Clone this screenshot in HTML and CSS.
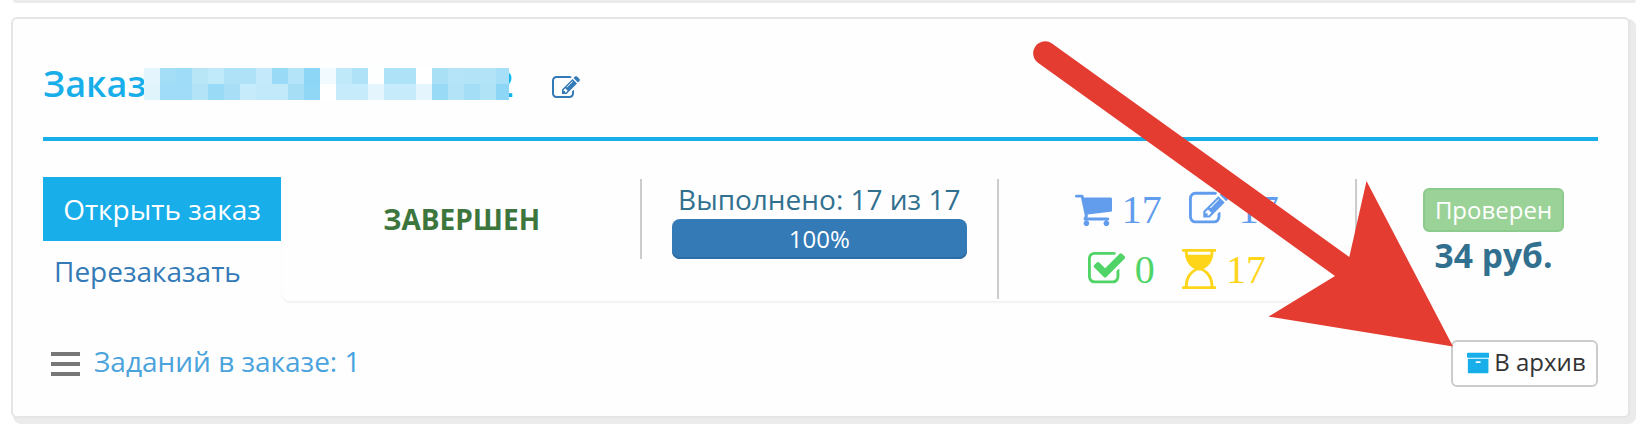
FILE: index.html
```html
<!DOCTYPE html>
<html lang="ru">
<head>
  <meta charset="UTF-8">
  <meta name="viewport" content="width=device-width, initial-scale=1">
  <title>Заказы</title>
  <link rel="stylesheet" href="styles.css">
</head>
<body>

  <div class="prev-order"></div>

  <div class="order">

    <!-- Заголовок заказа -->
    <div class="order-header">
      <h2>Заказ</h2>
      <svg class="mosaic" width="365" height="32" viewBox="0 0 365 32" shape-rendering="crispEdges" id="mosaic"></svg>
      <span class="title-end">2</span>
      <svg class="edit-icon" viewBox="64 0 1792 1792"><use href="#i-edit"/></svg>
    </div>

    <!-- Состояние заказа -->
    <div class="order-body">
      <div class="actions">
        <a class="btn-open">Открыть заказ</a>
        <a class="btn-repeat">Перезаказать</a>
      </div>
      <div class="info">
        <div class="col status">ЗАВЕРШЕН</div>
        <div class="col done">
          <div class="done-text">Выполнено: 17 из 17</div>
          <div class="progress">100%</div>
        </div>
        <div class="col stats">
          <div class="stats-row">
            <span class="stat blue"><svg class="w-37" viewBox="64 0 1664 1792"><use href="#i-cart"/></svg>17</span>
            <span class="stat blue"><svg class="w-40" viewBox="64 0 1792 1792"><use href="#i-edit"/></svg>17</span>
          </div>
          <div class="stats-row">
            <span class="stat green"><svg class="w-37" viewBox="64 0 1664 1792"><use href="#i-check"/></svg>0</span>
            <span class="stat yellow"><svg class="w-34" viewBox="0 0 1536 1792"><use href="#i-hourglass"/></svg>17</span>
          </div>
        </div>
      </div>
      <div class="price">
        <span class="badge">Проверен</span>
        <b>34 руб.</b>
      </div>
    </div>

    <!-- Нижняя строка -->
    <div class="order-footer">
      <div class="tasks">
        <span class="burger"><i></i><i></i><i></i></span>
        <a>Заданий в заказе: 1</a>
      </div>
      <button class="btn-archive">
        <svg viewBox="64 0 1664 1792"><use href="#i-archive"/></svg>В архив
      </button>
    </div>
  </div>

  <svg class="arrow" width="412" height="308" viewBox="1042 40 412 308">
    <path d="M1052 43.4L1349.3 257L1366.5 181L1453 346.6L1268.5 316.6L1335 276L1038.3 63.1A11.9 11.9 0 0 1 1052 43.4Z"/>
  </svg>

  <svg class="sprite">
    <path id="i-cart" d="M704 1536q0 52-38 90t-90 38-90-38-38-90 38-90 90-38 90 38 38 90zm896 0q0 52-38 90t-90 38-90-38-38-90 38-90 90-38 90 38 38 90zm128-1088v512q0 24-16.500 42.500t-40.500 21.500l-1044 122q13 60 13 70 0 16-24 64h920q26 0 45 19t19 45-19 45-45 19h-1024q-26 0-45-19t-19-45q0-11 8-31.500t16-36 21.500-40 15.500-29.500l-177-823h-204q-26 0-45-19t-19-45 19-45 45-19h256q16 0 28.500 6.500t19.500 15.500 13 24.500 8 26 5.500 29.500 4.500 26h1201q26 0 45 19t19 45z"/>
    <path id="i-edit" d="M888 1184l116-116-152-152-116 116v56h96v96h56zm440-720q-16-16-33 1l-350 350q-17 17-1 33t33-1l350-350q17-17 1-33zm80 594v190q0 119-84.500 203.500t-203.500 84.500h-832q-119 0-203.500-84.500t-84.500-203.500v-832q0-119 84.500-203.500t203.500-84.500h832q63 0 117 25 15 7 18 23 3 17-9 29l-49 49q-14 14-32 8-23-6-45-6h-832q-66 0-113 47t-47 113v832q0 66 47 113t113 47h832q66 0 113-47t47-113v-126q0-13 9-22l64-64q15-15 35-7t20 29zm-96-738l288 288-672 672h-288v-288zm444 132l-92 92-288-288 92-92q28-28 68-28t68 28l152 152q28 28 28 68t-28 68z" transform="translate(64 0)"/>
    <path id="i-check" d="M1472 930v318q0 119-84.500 203.500t-203.500 84.500h-832q-119 0-203.500-84.500t-84.500-203.500v-832q0-119 84.500-203.500t203.500-84.500h832q63 0 117 25 15 7 18 23 3 17-9 29l-49 49q-10 10-23 10-3 0-9-2-23-6-45-6h-832q-66 0-113 47t-47 113v832q0 66 47 113t113 47h832q66 0 113-47t47-113v-254q0-13 9-22l64-64q10-10 23-10 6 0 12 3 20 8 20 29zm231-489l-814 814q-24 24-57 24t-57-24l-430-430q-24-24-24-57t24-57l110-110q24-24 57-24t57 24l263 263 647-647q24-24 57-24t57 24l110 110q24 24 24 57t-24 57z"/>
    <path id="i-hourglass" fill-rule="evenodd" d="M32 0H1504Q1536 0 1536 32V96Q1536 128 1504 128H1408C1408 510 1210 790 962 896C1210 1002 1408 1282 1408 1664H1504Q1536 1664 1536 1696V1760Q1536 1792 1504 1792H32Q0 1792 0 1760V1696Q0 1664 32 1664H128C128 1282 326 1002 574 896C326 790 128 510 128 128H32Q0 128 0 96V32Q0 0 32 0ZM256 128Q256 195 265 256H1271Q1280 195 1280 128ZM256 1664H1280C1280 1310 1080 1050 860 960H676C456 1050 256 1310 256 1664Z"/>
    <path id="i-archive" d="M1088 832q0-26-19-45t-45-19h-256q-26 0-45 19t-19 45 19 45 45 19h256q26 0 45-19t19-45zm576-192v960q0 26-19 45t-45 19h-1408q-26 0-45-19t-19-45v-960q0-26 19-45t45-19h1408q26 0 45 19t19 45zm64-448v256q0 26-19 45t-45 19h-1536q-26 0-45-19t-19-45v-256q0-26 19-45t45-19h1536q26 0 45 19t19 45z"/>
  </svg>

  <script>
    // Номер заказа скрыт мозаикой 16x16
    const rows = [
      'e5f5fd a4def6 9fdcf7 b8e6f7 c0e9fa afe2f6 afe2f6 c3e9fa 99daf6 b3e4f7 8ed6f5 f1faff bfe8f9 afe2f7 fdffff aee2f6 aee2f6 ffffff a9e0f6 b5e4f8 b3e3f7 b3e3f7 a6dff7',
      'e0f4fb a0dcf7 a0dcf7 b3e3f7 99daf6 a8dff6 c6ebfb c2e9fa c2e9fa a6def6 8fd7f5 ffffff c6ebfb c6ebfb e5f5fd c6ebfb c6ebfb e5f5fd 99daf6 b3e3f7 a4def6 b1e3f7 8dd6f5'
    ];
    document.getElementById('mosaic').innerHTML = rows.map((row, y) =>
      row.split(' ').map((c, x) =>
        `<rect x="${x * 16}" y="${y * 16}" width="16" height="16" fill="#${c}"/>`
      ).join('')
    ).join('');
  </script>
</body>
</html>
```
FILE: styles.css
```css
* {
  margin: 0;
  padding: 0;
  box-sizing: border-box;
}
body {
  position: relative;
  height: 432px;
  overflow: hidden;
  background: #fff;
  font-family: 'Open Sans', 'Noto Sans', sans-serif;
  font-size: 28px;
  line-height: 40px;
  color: #333;
}
svg {
  fill: currentColor;
}

/* Тень предыдущего заказа */
.prev-order {
  height: 3px;
  margin: 0 14px 14px 13px;
  background: #ebebeb;
  border-radius: 0 0 8px 8px;
}

/* Карточка заказа */
.order {
  height: 401px;
  margin: 0 20px 0 11px;
  padding: 0 30px;
  border: 2px solid #e5e5e5;
  border-radius: 6px;
  background: #fefefe;
  box-shadow: 4px 4px 0 2px #ebebeb;
}

/* --- Заголовок --- */
.order-header {
  display: flex;
  align-items: center;
  height: 122px;
  padding-top: 11px;
  border-bottom: 4px solid #17aeea;
  color: #17aeea;
}
.order-header h2 {
  width: 101px;
  font-size: 36px;
  font-weight: 600;
  white-space: nowrap;
}
.mosaic {
  position: relative;
  z-index: 1;
}
.title-end {
  margin-left: -16px;
  font-size: 36px;
  font-weight: 600;
}
.edit-icon {
  width: 28px;
  height: 28px;
  margin: 8px 0 0 38px;
  color: #337ab7;
}

/* --- Состояние --- */
.order-body {
  display: flex;
  height: 178px;
  padding-top: 36px;
}
.actions {
  width: 239px;
}
.actions a {
  display: block;
}
.btn-open {
  width: 238px;
  height: 64px;
  line-height: 64px;
  text-align: center;
  background: #17aeea;
  color: #fff;
}
.btn-repeat {
  padding: 10px 0 0 11px;
  color: #337ab7;
}
.info {
  display: flex;
  width: 1075px;
  height: 124px;
  padding: 2px 0 0 2px;
  border-radius: 0 0 8px 8px;
  box-shadow: 0 2px 2px rgba(0, 0, 0, 0.05);
}
.col {
  width: 357.5px;
  border-right: 2px solid #ccc;
  text-align: center;
}
.status {
  height: 80px;
  padding-top: 20px;
  font-weight: 700;
  color: #3c763d;
}
.done {
  height: 120px;
  padding: 0 30px;
  color: #31708f;
}
.progress {
  height: 40px;
  line-height: 39px;
  border-radius: 8px;
  background: #337ab7;
  box-shadow: inset 0 -2px 0 #2e6da4;
  font-size: 24px;
  color: #fff;
}
.stats {
  height: 120px;
}
.stats-row {
  display: flex;
  justify-content: center;
  gap: 27px;
  height: 60px;
}
.stat {
  display: flex;
  gap: 10px;
  padding-top: 11px;
  font-family: 'Liberation Serif', serif;
  font-size: 40px;
}
.stat svg {
  height: 40px;
  margin-top: -1px;
}
.w-34 { width: 34.3px; }
.w-37 { width: 37.1px; }
.w-40 { width: 40px; }
.blue { color: #619ced; }
.green { color: #50d468; }
.yellow { color: #ffd51a; }

.price {
  display: flex;
  flex-direction: column;
  align-items: center;
  width: 273px;
  margin-right: -34px;
  padding-top: 11px;
  font-size: 33.6px;
  color: #31708f;
}
.badge {
  height: 44px;
  padding: 0 10px;
  border: 2px solid #8dcb8d;
  border-radius: 6px;
  background: #9bd298;
  font-size: 24px;
  color: #fff;
}
.price b {
  margin-top: 3px;
}

/* --- Нижняя строка --- */
.order-footer {
  display: flex;
  justify-content: space-between;
  padding-top: 21px;
}
.tasks {
  display: flex;
  gap: 14px;
  padding: 1px 0 0 8px;
  color: #4aa3dc;
}
.burger {
  display: flex;
  flex-direction: column;
  gap: 6px;
  width: 29px;
  padding-top: 11px;
}
.burger i {
  height: 4px;
  background: #777;
}
.btn-archive {
  display: flex;
  align-items: center;
  gap: 5px;
  width: 147px;
  height: 47px;
  padding: 0 0 3px 14px;
  border: 2px solid #ccc;
  border-radius: 6px;
  background: #fff;
  font: inherit;
  font-size: 24px;
  color: #333;
  white-space: nowrap;
}
.btn-archive svg {
  width: 22.3px;
  height: 24px;
  margin-top: 2px;
  color: #17aeea;
}

/* Стрелка поверх карточки */
.arrow {
  position: absolute;
  left: 1042px;
  top: 40px;
  overflow: visible;
  color: #e53c31;
}
.sprite {
  display: none;
}
```
